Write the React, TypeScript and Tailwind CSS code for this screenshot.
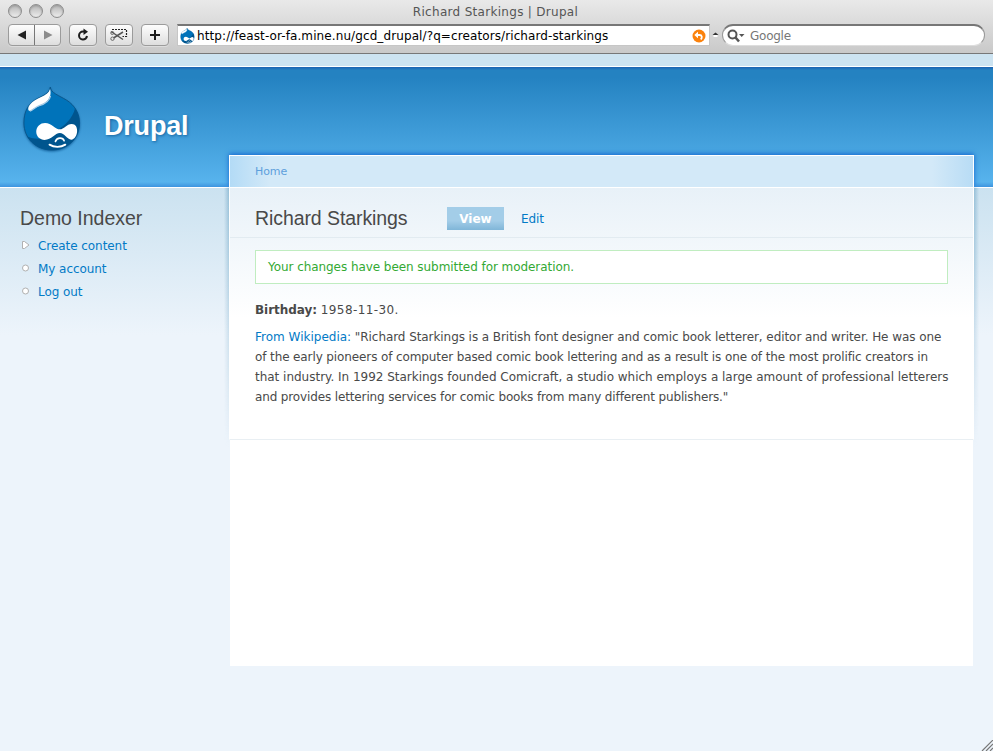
import React from "react";

const UI = "font-['DejaVu_Sans',sans-serif]";
const HEAD = "font-['Liberation_Sans',sans-serif]";
const BODY = "M28.300 0C28.500 6 37 8.500 45 13.500C53 18.500 58 27 58 36.500C58 53 45 64 30 64C13.500 64 1.500 52 1.500 36.500C1.500 25 5.500 18 13 13C20 9 27.500 7 28.300 0Z";

function Drop({ className }: { className: string }) {
  return (
    <svg className={className} viewBox="0 0 60 66" fill="none">
      <defs>
        <clipPath id="dropClip">
          <path d={BODY} />
        </clipPath>
      </defs>
      <path d={BODY} fill="#0073ba" stroke="#0b578c" strokeWidth="1" />
      <g clipPath="url(#dropClip)">
        <path d="M54 18C53 28 46 37 38 42C30 50 18 57 2 49C8 60 16 66 31 66C50 66 62 53 60 30Z" fill="#00558e" />
      </g>
      <path d="M28 2C29.500 7 28 12 23.500 15.500C19 19 13 20 9 24C6 25.500 4.500 22 7.500 18C13 10.500 26 10 28 2Z" fill="#fff" />
      <path d="M28.500 9C27.500 14 22 17.500 17 19C13 20.500 10 24 7.500 24.500" stroke="#a9cde7" strokeWidth="1.300" />
      <path d="M23 36.500C29.500 36.500 33.500 43 38 43C42 43 45 37.500 50 37.500C54 37.500 55.500 40.500 55.500 44.500C55.500 49 53 53.500 49.500 53.500C45.500 53.500 42.500 46.800 38 46.800C33 46.800 29.500 53.700 22.500 53.700C18 53.700 14 50.500 14 45.500C14 40 18 36.500 23 36.500Z" fill="#fff" />
      <path d="M33.500 55.200C35 51 41 51 42.300 54.500" stroke="#fff" strokeWidth="1.700" strokeLinecap="round" />
      <path d="M27.500 58.500C32 61.500 39 61.500 43.500 58.500" stroke="#fff" strokeWidth="1.900" strokeLinecap="round" />
    </svg>
  );
}

function Lights() {
  return (
    <div className="flex w-[140px] gap-[7px] pl-2 pt-1">
      {[0, 1, 2].map((i) => (
        <span key={i} className="h-[14px] w-[14px] rounded-full border border-[#8d8d8d] bg-linear-to-b from-[#b5b5b5] to-[#ededed] shadow-[inset_0_1px_2px_#999]" />
      ))}
    </div>
  );
}

const BTN = "flex h-[22px] items-center justify-center rounded-[4px] border border-[#9b9b9b] bg-linear-to-b from-[#fdfdfd] to-[#dedede] shadow-[0_1px_0_#ddd]";

function Toolbar() {
  return (
    <div className="flex h-[30px] items-start pl-2 pt-px">
      <div className={`${BTN} w-[53px]`}>
        <span className="flex h-full w-[26px] items-center justify-center border-r border-[#777]">
          <svg className="h-[10px] w-[10px]" viewBox="0 0 10 10"><path d="M9 .5V9.500L.5 5Z" fill="#222" /></svg>
        </span>
        <span className="flex h-full w-[25px] items-center justify-center">
          <svg className="h-[10px] w-[10px]" viewBox="0 0 10 10"><path d="M1 .5V9.500L9.500 5Z" fill="#8c8c8c" /></svg>
        </span>
      </div>
      <div className={`${BTN} ml-2 w-[28px]`}>
        <svg className="h-[14px] w-[14px]" viewBox="0 0 14 14" fill="none">
          <path d="M8.500 3.500H7A4 4 0 1 0 11 8" stroke="#1c1c1c" strokeWidth="2" />
          <path d="M7.500 .5L12 3.700L7.500 7Z" fill="#1c1c1c" />
        </svg>
      </div>
      <div className={`${BTN} ml-2 w-[28px]`}>
        <svg className="h-[14px] w-[18px]" viewBox="0 0 18 14" fill="none">
          <path d="M2 1.500H16.500V8.500H12.500" stroke="#222" strokeWidth="1.200" strokeDasharray="2 1" />
          <path d="M1 3.500L13 11.500M3.500 10L13 4" stroke="#555" strokeWidth="1.500" />
          <circle cx="2.500" cy="10.700" r="1.700" stroke="#666" />
          <circle cx="2.300" cy="5" r="1.500" stroke="#666" />
        </svg>
      </div>
      <div className={`${BTN} ml-2 w-[28px]`}>
        <svg className="h-[12px] w-[12px]" viewBox="0 0 12 12"><path d="M6 1V11M1 6H11" stroke="#1a1a1a" strokeWidth="2" /></svg>
      </div>
      <div className="ml-2 flex h-[22px] w-[533px] items-center border border-[#c6c6c6] border-t-2 border-t-[#777] bg-white pl-[2px] pr-[3px]">
        <Drop className="h-[16px] w-[15px]" />
        <span className="ml-[2px] flex-1 whitespace-nowrap text-[12px] leading-[18px] tracking-[0.1px] text-black">http://feast-or-fa.mine.nu/gcd_drupal/?q=creators/richard-starkings</span>
        <svg className="h-[14px] w-[14px]" viewBox="0 0 14 14" fill="none">
          <circle cx="7" cy="7" r="6.500" fill="#fb820d" />
          <path d="M5.500 6H7.500C10 6 10.500 8.500 8.800 10.500" stroke="#fff" strokeWidth="1.800" />
          <path d="M2.300 6L6 2.800V9.200Z" fill="#fff" />
        </svg>
      </div>
      <svg className="ml-[2px] mt-[8px] h-[5px] w-[7px]" viewBox="0 0 7 5"><path d="M.5 3L3.500 .5L6.500 3Z" fill="#333" /><path d="M1.500 3H5.500V5H1.500Z" fill="#fff" /></svg>
      <div className="ml-[3px] flex h-[22px] w-[263px] items-center rounded-full border border-[#999] border-t-2 border-t-[#777] border-b-[#ddd] bg-white pl-[4px]">
        <svg className="h-[14px] w-[18px]" viewBox="0 0 18 14" fill="none">
          <circle cx="5.500" cy="5.500" r="4" stroke="#555" strokeWidth="2" />
          <path d="M8.500 8.500L12 12.500" stroke="#555" strokeWidth="2.500" />
          <path d="M12 5H17.500L14.700 8Z" fill="#555" />
        </svg>
        <span className="ml-[5px] text-[12px] leading-[18px] tracking-[-0.25px] text-[#777]">Google</span>
      </div>
    </div>
  );
}

function Sidebar() {
  const items = ["Create content", "My account", "Log out"];
  return (
    <aside className="flex w-[229px] shrink-0 justify-between">
      <div className="pl-5 pt-[49px]">
        <h2 className={`${HEAD} text-[19.5px] leading-[28px] tracking-[-0.02px] text-[#494949]`}>Demo Indexer</h2>
        <ul className="mt-[2px]">
          {items.map((t, i) => (
            <li key={t} className="flex h-[23px] items-center">
              <svg className="mb-[2px] ml-[2px] h-[8px] w-[8px]" viewBox="0 0 8 8">
                {i === 0 ? (
                  <path d="M.5 .5V7.500H2.500L7 4L2.500 .5Z" fill="#fff" stroke="#b0b0b0" />
                ) : (
                  <circle cx="3.500" cy="4" r="3" fill="#fff" stroke="#b0b0b0" />
                )}
              </svg>
              <a className="ml-2 whitespace-nowrap text-[12px] leading-[20px] tracking-[-0.06px] text-[#027ac6]">{t}</a>
            </li>
          ))}
        </ul>
      </div>
      <div className="mt-[33px] h-[260px] w-[5px] bg-linear-to-r from-transparent to-[#7fb0ccb0] mask-b-from-0%" />
    </aside>
  );
}

function Article() {
  return (
    <main className="h-[511px] w-[745px] shrink-0">
      <div className="h-[32px] border-x border-t border-white bg-[linear-gradient(to_right,#b3dbf6_0,#d3e9f8_40px,#d3e9f8_702px,#b8dcf5_743px)] pl-[25px] shadow-[0_-1px_5px_#1263cf]">
        <span className="block text-[11px] leading-[31px] tracking-[-0.1px] text-[#5ea0dc]">Home</span>
      </div>
      <div className="relative h-[253px] border border-x-white border-b-[#e9eff3] border-t-white bg-linear-to-b from-[#e8f1f8] to-white to-[130px]">
        <div className="flex h-[50px] items-start border-b border-[#e2ebf1] pl-[25px] pt-[19px]">
          <h1 className={`${HEAD} w-[192px] whitespace-nowrap text-[19.5px] leading-[23px] tracking-[-0.08px] text-[#494949]`}>Richard Starkings</h1>
          <span className="h-[23px] w-[57px] bg-linear-to-b from-[#a3cde8] from-60% to-[#80b6d8] text-center text-[12px] font-bold leading-[24px] text-white">View</span>
          <span className="ml-[17px] text-[12px] leading-[24px] tracking-[-0.1px] text-[#027ac6]">Edit</span>
        </div>
        <div className="ml-[25px] mt-[12px] h-[34px] w-[693px] border border-[#c0edc0] bg-white pl-[12px] text-[12px] leading-[32px] tracking-[-0.06px] text-[#33a933]">Your changes have been submitted for moderation.</div>
        <div className="ml-[25px] mt-[16px] whitespace-nowrap text-[12px] leading-[20px] text-[#494949]">
          <p><b className="tracking-[-0.05px]">Birthday:</b> <span className="tracking-[0.4px]">1958-11-30.</span></p>
          <p className="mt-[7px] tracking-[-0.07px]"><a className="tracking-normal text-[#027ac6]">From Wikipedia:</a> "Richard Starkings is a British font designer and comic book letterer, editor and writer. He was one</p>
          <p className="tracking-[-0.113px]">of the early pioneers of computer based comic book lettering and as a result is one of the most prolific creators in</p>
          <p className="tracking-[-0.016px]">that industry. In 1992 Starkings founded Comicraft, a studio which employs a large amount of professional letterers</p>
          <p className="tracking-[-0.135px]">and provides lettering services for comic books from many different publishers."</p>
        </div>
      </div>
      <div className="mx-px h-[226px] bg-white" />
    </main>
  );
}

export default function App() {
  return (
    <div className={`${UI} h-[751px] w-[993px] overflow-hidden bg-[#edf4fb]`}>
      <header className="h-[54px] border-b border-[#777] bg-linear-to-b from-[#e9e9e9] to-[#c9c9c9]">
        <div className="flex h-[23px]">
          <Lights />
          <div className="w-[711px] text-center text-[12px] leading-[24px] tracking-[0.3px] text-[#555]">Richard Starkings | Drupal</div>
        </div>
        <Toolbar />
      </header>
      <div className="h-[13px] border-b border-white bg-[#cce3f1]" />
      <div className="flex h-[121px] border-b border-white bg-[linear-gradient(#1b62b2_0,#2482c1_3px,#2482c1_10px,#57b3ed_115px,#3d94df_120px)]">
        <Drop className="ml-[22px] mt-[20px] h-[65px] w-[60px] drop-shadow-[0_1px_1px_#1665a0]" />
        <div className={`${HEAD} ml-[22px] mt-[42px] text-[27px] font-bold leading-[34px] tracking-[-0.2px] text-white [text-shadow:1px_1px_3px_#1665a0]`}>Drupal</div>
      </div>
      <div className="-mt-[33px] flex h-[596px] bg-[linear-gradient(transparent_33px,#cbe2f0_33px,#edf4fb_180px)]">
        <Sidebar />
        <Article />
        <div className="flex flex-1 flex-col justify-between">
          <div className="mt-[33px] h-[260px] w-[5px] bg-linear-to-l from-transparent to-[#7fb0ccb0] mask-b-from-0%" />
          <svg className="ml-auto h-[11px] w-[12px]" viewBox="0 0 12 11"><path d="M1 11L12 0M5 11L12 4M9 11L12 8" stroke="#777" strokeWidth="1.200" /></svg>
        </div>
      </div>
    </div>
  );
}
